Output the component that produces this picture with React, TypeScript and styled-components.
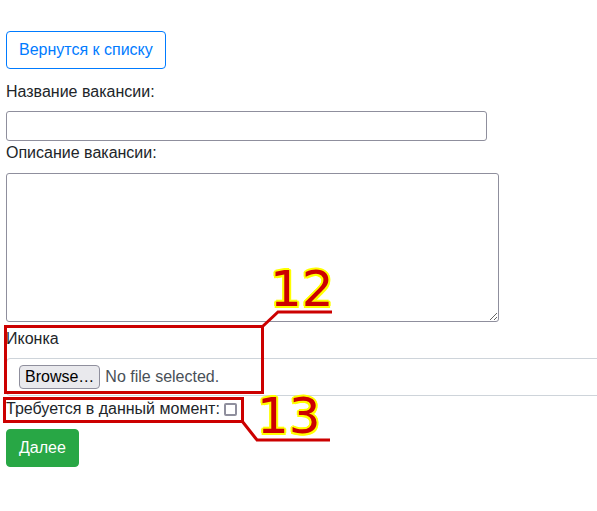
import styled, { createGlobalStyle } from "styled-components";

const GlobalStyle = createGlobalStyle`
  html, body {
    margin: 0;
    padding: 0;
    background: #fff;
  }
  body {
    font-family: "Liberation Sans", Arial, sans-serif;
    font-size: 16px;
    line-height: 24px;
    color: #212529;
  }
`;

export default function App() {
    return (
        <Page>
            <GlobalStyle />
            <BackButton type="button">Вернутся к списку</BackButton>
            <Form onSubmit={e => e.preventDefault()}>
                <Label htmlFor="title" $gap={7}>Название вакансии:</Label>
                <TextInput id="title" type="text" />
                <Label htmlFor="descr">Описание вакансии:</Label>
                <TextArea id="descr" />
                <Label $gap={7}>Иконка</Label>
                <FileField>
                    <BrowseButton type="button">Browse…</BrowseButton>
                    <FileName>No file selected.</FileName>
                </FileField>
                <CheckLabel>
                    Требуется в данный момент:
                    <CheckBox type="checkbox" />
                </CheckLabel>
                <SubmitButton type="submit">Далее</SubmitButton>
            </Form>

            <MarkBox $x={4} $y={325} $w={260} $h={69} />
            <MarkBox $x={3} $y={397} $w={241} $h={26} />
            <Leaders width="597" height="511">
                <polyline points="262,327 278,312 332,312" />
                <polyline points="242,421 257,440 330,440" />
            </Leaders>
            <MarkNumber $x={270} $y={264}>12</MarkNumber>
            <MarkNumber $x={257} $y={391}>13</MarkNumber>
        </Page>
    );
}

const Page = styled.div`
  position: relative;
  min-height: 511px;
  padding: 31px 0 0 6px;
  box-sizing: border-box;
  overflow: hidden;
`;

const BackButton = styled.button`
  display: block;
  height: 38px;
  padding: 6px 12px;
  border: 1px solid #007bff;
  border-radius: 4px;
  background: #fff;
  color: #007bff;
  font: 16px/24px "Liberation Sans", Arial, sans-serif;
  cursor: pointer;
`;

const Form = styled.form`
  margin-top: 11px;
`;

const Label = styled.label<{ $gap?: number }>`
  display: block;
  margin-bottom: ${p => p.$gap ?? 8}px;
  line-height: 24px;
`;

const TextInput = styled.input`
  display: block;
  width: 481px;
  height: 30px;
  box-sizing: border-box;
  border: 1px solid #8f8f9d;
  border-radius: 3px;
  padding: 2px 4px;
  font: 16px "Liberation Sans", Arial, sans-serif;
`;

const TextArea = styled.textarea`
  display: block;
  width: 493px;
  height: 149px;
  box-sizing: border-box;
  margin: 0 0 5px;
  border: 1px solid #8f8f9d;
  border-radius: 3px;
  font: 16px "Liberation Mono", monospace;
`;

const FileField = styled.div`
  display: flex;
  align-items: center;
  width: calc(100% + 20px);
  height: 38px;
  box-sizing: border-box;
  padding: 6px 12px;
  border: 1px solid #ced4da;
  border-radius: 4px;
  color: #495057;
`;

const BrowseButton = styled.button`
  height: 24px;
  padding: 0 5px;
  border: 1px solid #8f8f9d;
  border-radius: 4px;
  background: #e9e9ed;
  color: #000;
  font: 16px/22px "Liberation Sans", Arial, sans-serif;
`;

const FileName = styled.span`
  margin-left: 5px;
`;

const CheckLabel = styled.label`
  display: flex;
  align-items: center;
  margin-top: 1px;
  line-height: 24px;
`;

const CheckBox = styled.input`
  appearance: none;
  width: 13px;
  height: 13px;
  margin: 1px 0 0 4px;
  border: 2px solid #8f8f9d;
  border-radius: 2px;
  background: #fff;
  box-sizing: border-box;
`;

const SubmitButton = styled.button`
  display: block;
  margin-top: 8px;
  height: 38px;
  padding: 6px 12px;
  border: 1px solid #28a745;
  border-radius: 4px;
  background: #28a745;
  color: #fff;
  font: 16px/24px "Liberation Sans", Arial, sans-serif;
`;

const MarkBox = styled.div<{ $x: number; $y: number; $w: number; $h: number }>`
  position: absolute;
  left: ${p => p.$x}px;
  top: ${p => p.$y}px;
  width: ${p => p.$w}px;
  height: ${p => p.$h}px;
  box-sizing: border-box;
  border: 3px solid #cc0000;
  pointer-events: none;
`;

const Leaders = styled.svg`
  position: absolute;
  left: 0;
  top: 0;
  pointer-events: none;

  polyline {
    fill: none;
    stroke: #cc0000;
    stroke-width: 3;
  }
`;

const MarkNumber = styled.div<{ $x: number; $y: number }>`
  position: absolute;
  left: ${p => p.$x}px;
  top: ${p => p.$y}px;
  font: 50px/1 "DejaVu Sans", sans-serif;
  color: #cc0000;
  text-shadow:
    -2px 0 #ffff00, 2px 0 #ffff00, 0 -2px #ffff00, 0 2px #ffff00,
    -1.5px -1.5px #ffff00, 1.5px -1.5px #ffff00, -1.5px 1.5px #ffff00, 1.5px 1.5px #ffff00;
  pointer-events: none;
`;
